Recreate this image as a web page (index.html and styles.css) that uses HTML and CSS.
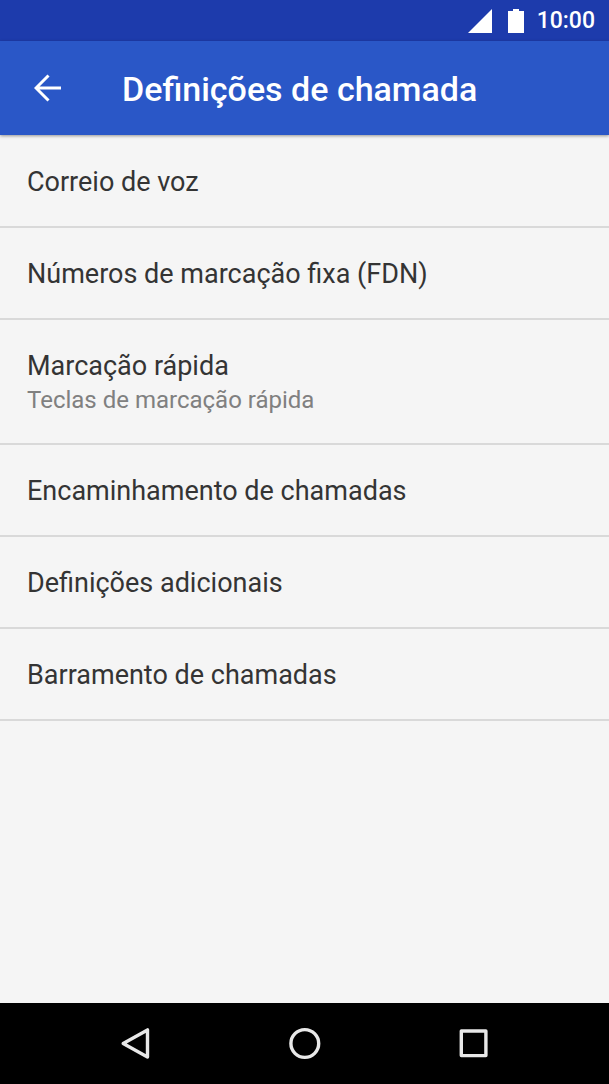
FILE: index.html
```html
<!DOCTYPE html>
<html lang="pt">
<head>
<meta charset="utf-8">
<meta name="viewport" content="width=device-width, initial-scale=1">
<title>Definições de chamada</title>
<link rel="stylesheet" href="styles.css">
</head>
<body>
<div class="screen">
  <div class="status-bar">
    <svg class="signal" viewBox="0 0 24 24" aria-hidden="true"><path d="M24 0V24H0Z"/></svg>
    <svg class="battery" viewBox="0 0 16 24" aria-hidden="true"><path d="M5 0H11V2H16V24H0V2H5Z"/></svg>
    <span class="clock">10:00</span>
  </div>
  <header class="app-bar">
    <button class="back" type="button" aria-label="Voltar">
      <svg viewBox="0 0 28 28" aria-hidden="true"><path d="M27 14H3M14.5 1.5L2 14L14.5 26.5"/></svg>
    </button>
    <h1 class="title">Definições de chamada</h1>
  </header>
  <main class="settings">
    <a class="row" href="#correio"><span class="label">Correio de voz</span></a>
    <a class="row" href="#fdn"><span class="label">Números de marcação fixa (FDN)</span></a>
    <a class="row row-tall" href="#rapida"><span class="label">Marcação rápida</span><span class="summary">Teclas de marcação rápida</span></a>
    <a class="row" href="#encaminhamento"><span class="label">Encaminhamento de chamadas</span></a>
    <a class="row" href="#adicionais"><span class="label">Definições adicionais</span></a>
    <a class="row" href="#barramento"><span class="label">Barramento de chamadas</span></a>
  </main>
  <nav class="nav-bar">
    <button class="nav-button" type="button" aria-label="Anterior"><svg viewBox="0 0 34 34" aria-hidden="true"><path d="M28.5 2.9V30.1L4.2 16.5Z"/></svg></button>
    <button class="nav-button" type="button" aria-label="Início"><svg viewBox="0 0 34 34" aria-hidden="true"><circle cx="16.8" cy="16.5" r="13.9"/></svg></button>
    <button class="nav-button" type="button" aria-label="Recentes"><svg viewBox="0 0 34 34" aria-hidden="true"><rect x="4.3" y="4" width="24.6" height="24.6"/></svg></button>
  </nav>
</div>
</body>
</html>
```

FILE: styles.css
```css
* { box-sizing: border-box; }
body { margin: 0; font-family: Roboto, sans-serif; color: #343434; background: #f5f5f5; }
button { border: 0; padding: 0; background: none; }
svg { display: block; }
.screen { display: flex; flex-direction: column; min-height: 100vh; }
.status-bar { display: flex; align-items: center; justify-content: flex-end; height: 41px; padding-right: 14px; background: #1d3bac; color: #fff; }
.status-bar svg { height: 24px; fill: #fff; }
.signal { width: 24px; margin-right: 16px; }
.battery { width: 16px; margin-right: 13px; }
.clock { font-size: 23px; font-weight: 500; line-height: 28px; }
.app-bar { display: flex; align-items: center; height: 94px; padding-left: 34px; background: #2a57c7; color: #fff; box-shadow: 0 1px 3px rgba(0, 0, 0, 0.4); }
.back { width: 28px; height: 28px; margin-right: 60px; }
.back svg { width: 28px; height: 28px; fill: none; stroke: #fff; stroke-width: 3; }
.title { margin: 0; padding-top: 2px; font-size: 34px; font-weight: 500; line-height: 40px; }
.settings { flex: 1; padding-top: 1px; }
.row { display: flex; flex-direction: column; padding: 30px 27px 28px; border-bottom: 2px solid #d9d9d9; color: inherit; text-decoration: none; }
.row-tall { padding-bottom: 25px; }
.label { font-size: 27px; line-height: 32px; }
.summary { font-size: 24px; line-height: 36px; color: #808080; }
.nav-bar { display: flex; align-items: center; justify-content: center; gap: 135px; height: 81px; background: #000; }
.nav-button { width: 34px; height: 34px; }
.nav-button svg { width: 34px; height: 34px; fill: none; stroke: #e8e8e8; stroke-width: 3.4; stroke-linejoin: round; }
```
